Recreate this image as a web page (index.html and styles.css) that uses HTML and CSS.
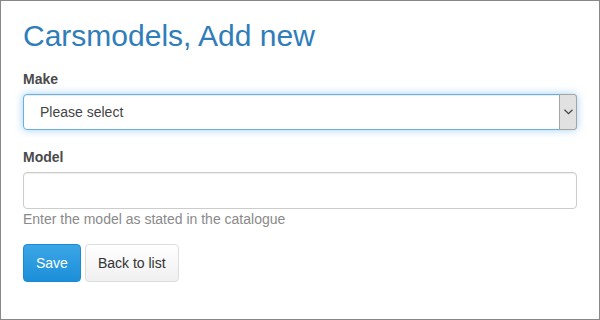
FILE: index.html
```html
<!DOCTYPE html>
<html lang="en">
<head>
    <meta charset="UTF-8">
    <title>Carsmodels, Add new</title>
    <link rel="stylesheet" href="styles.css">
</head>
<body>
    <div class="frame">
        <h1>Carsmodels, Add new</h1>
        <form class="model-form">
            <div class="form-group">
                <label for="make">Make</label>
                <div class="select-wrap">
                    <select id="make">
                        <option>Please select</option>
                    </select>
                    <span class="select-arrow">
                        <svg width="9" height="6" viewBox="0 0 9 6"><path d="M0.5 0.8 L4.5 4.6 L8.5 0.8" fill="none" stroke="#444" stroke-width="1.2"/></svg>
                    </span>
                </div>
            </div>
            <div class="form-group">
                <label for="model">Model</label>
                <input type="text" id="model">
                <p class="help">Enter the model as stated in the catalogue</p>
            </div>
            <div class="actions">
                <button type="button" class="btn btn-primary">Save</button>
                <button type="button" class="btn btn-default">Back to list</button>
            </div>
        </form>
    </div>
</body>
</html>
```

FILE: styles.css
```css
body {
    margin: 0;
    font-family: "Liberation Sans", Arial, sans-serif;
    font-size: 14px;
    color: #333;
    background: #fff;
}
.frame {
    width: 600px;
    height: 320px;
    box-sizing: border-box;
    border: 1px solid #888;
    padding: 0 22px;
}
h1 {
    margin: 18px 0 0;
    font-size: 30px;
    font-weight: normal;
    line-height: 33px;
    color: #2f7db9;
}
.form-group {
    margin-top: 17px;
}
label {
    display: block;
    font-weight: bold;
    line-height: 20px;
    color: #4a4a4a;
    margin-bottom: 5px;
}
.select-wrap {
    display: flex;
    height: 36px;
    box-sizing: border-box;
    border: 1px solid #66afe9;
    border-radius: 4px;
    box-shadow: inset 0 1px 1px rgba(0, 0, 0, .075), 0 0 8px rgba(102, 175, 233, .6);
    background: #fff;
}
.select-wrap select {
    flex: 1;
    appearance: none;
    -webkit-appearance: none;
    border: none;
    outline: none;
    background: transparent;
    font-family: inherit;
    font-size: 14px;
    color: #444;
    padding: 0 16px;
    margin: 0;
}
.select-arrow {
    width: 16px;
    display: flex;
    align-items: center;
    justify-content: center;
    background: #e1e1e1;
    border: 1px solid #a5a5a5;
    border-radius: 0 3px 3px 0;
    margin: -1px -1px -1px 0;
}
input[type="text"] {
    display: block;
    width: 100%;
    height: 37px;
    box-sizing: border-box;
    border: 1px solid #ccc;
    border-radius: 4px;
    box-shadow: inset 0 1px 1px rgba(0, 0, 0, .075);
    margin: 0;
}
.help {
    margin: 0;
    line-height: 20px;
    color: #8a8a8a;
}
.actions {
    display: flex;
    gap: 4px;
    margin-top: 15px;
}
.btn {
    height: 38px;
    box-sizing: border-box;
    padding: 0 12px;
    font-family: inherit;
    font-size: 14px;
    border-radius: 4px;
    cursor: pointer;
}
.btn-primary {
    color: #fff;
    border: 1px solid #1b8ad3;
    background: linear-gradient(#3ba6e6, #1c8fd9);
}
.btn-default {
    color: #333;
    border: 1px solid #ddd;
    background: linear-gradient(#fff, #f0f0f0);
}
```
